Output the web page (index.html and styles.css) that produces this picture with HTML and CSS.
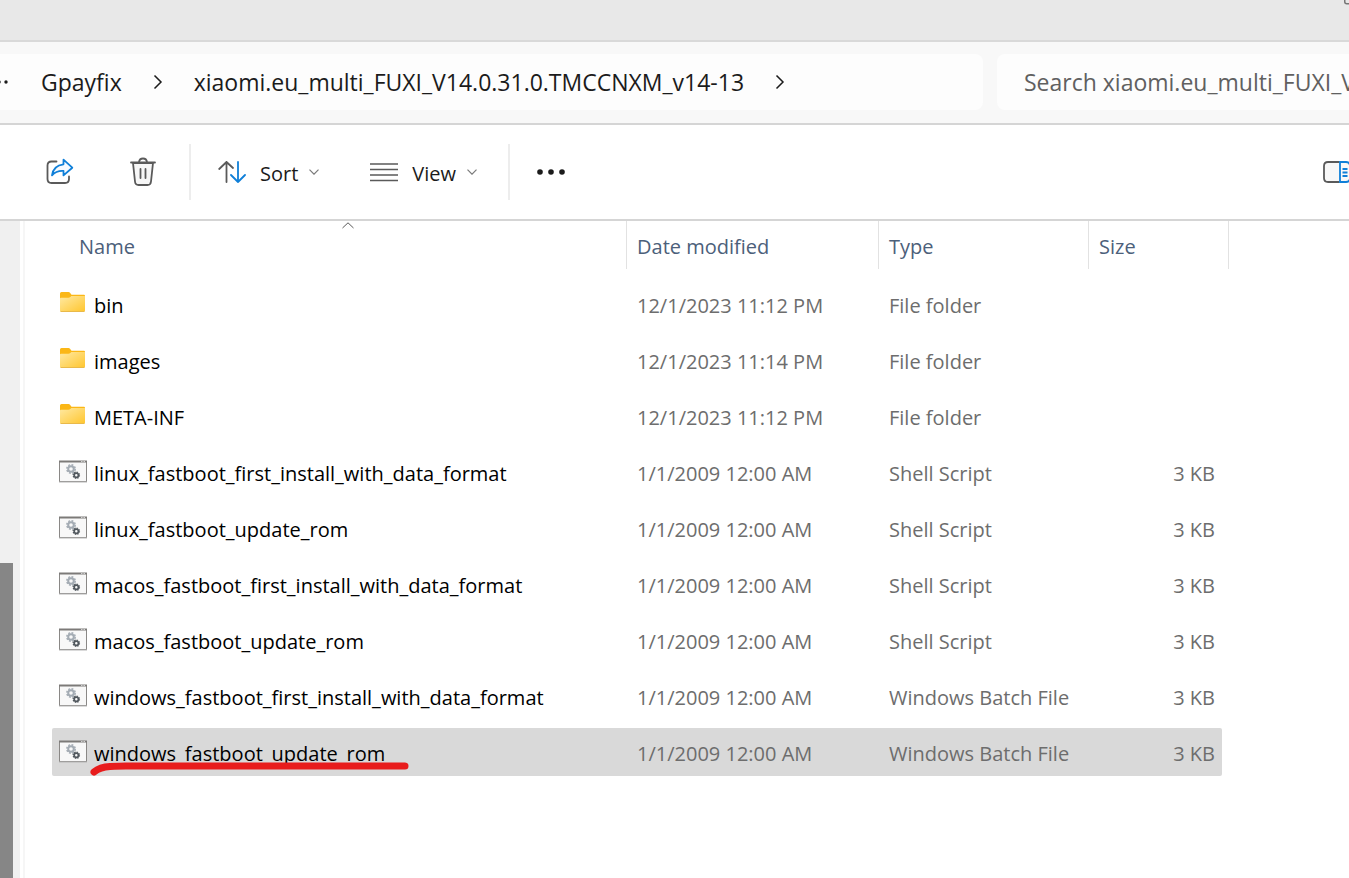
FILE: index.html
```html
<!DOCTYPE html>
<html lang="en">
  <head>
    <meta charset="utf-8">
    <meta name="viewport" content="width=device-width, initial-scale=1.0">
    <title>xiaomi.eu_multi_FUXI_V14.0.31.0.TMCCNXM_v14-13</title>
    <link rel="stylesheet" href="styles.css">
  </head>
  <body>

  <!-- shared icons -->
  <svg class="sprite" aria-hidden="true">
    <defs>
      <linearGradient id="folder_fill" x1="0" y1="0" x2="1" y2="1">
        <stop offset="0" stop-color="#ffe9a2"/>
        <stop offset="1" stop-color="#ffc62f"/>
      </linearGradient>
      <symbol id="folder" viewBox="0 2 28 24">
        <path d="M1 3.500Q1 2 2.500 2H9.500Q10.500 2 11.200 3L12.500 4.800H25Q26 4.800 26 6V12H1Z" fill="#fbb716"/>
        <path d="M1 8.500Q1 7.700 2 7.700H9.500Q10.500 7.700 11.300 7L12.300 6.100H26V20.500Q26 21.500 25 21.500H2Q1 21.500 1 20.500Z" fill="url(#folder_fill)"/>
        <path d="M1.500 21.500H25.500" stroke="#e9b94a" stroke-width="1"/>
      </symbol>
      <symbol id="script" viewBox="0 0 28 24">
        <rect x="0.500" y="1.500" width="27" height="20" fill="#f8f8f8" stroke="#8a8886"/>
        <path d="M0 1.500H28" stroke="#7c7a78" stroke-width="2"/>
        <path d="M22 1.500H23.500M24.500 1.500H26" stroke="#d0d0d0" stroke-width="1"/>
        <path d="M0 22H28" stroke="#b5b5b5" stroke-width="1"/>
        <circle cx="12" cy="9" r="2.800" fill="none" stroke="#a3abb3" stroke-width="2"/>
        <circle cx="12" cy="9" r="4.200" fill="none" stroke="#a3abb3" stroke-width="1.500" stroke-dasharray="1.900 1.400"/>
        <circle cx="17.300" cy="15.200" r="2.100" fill="none" stroke="#50575d" stroke-width="1.700"/>
        <circle cx="17.300" cy="15.200" r="3.200" fill="none" stroke="#50575d" stroke-width="1.200" stroke-dasharray="1.400 1.110"/>
      </symbol>
      <symbol id="chevron" viewBox="0 0 10 6">
        <path d="M0.500 0.700L5 5.200L9.500 0.700" fill="none" stroke="#7a7a7a" stroke-width="1.200"/>
      </symbol>
      <symbol id="crumb_arrow" viewBox="0 0 10 16">
        <path d="M1.500 1.500L8 8L1.500 14.500" fill="none" stroke="#1b1b1b" stroke-width="1.500"/>
      </symbol>
    </defs>
  </svg>

  <header class="titlebar">
    <button class="maximize" aria-label="Maximize">
      <svg width="16" height="16" viewBox="0 0 16 16"><rect x="0.750" y="0.750" width="14" height="14" rx="2" fill="none" stroke="#777" stroke-width="1.500"/></svg>
    </button>
  </header>

  <div class="address-bar">
    <nav class="breadcrumb" aria-label="Path">
      <button class="crumb-more" aria-label="More folders">
        <svg width="20" height="4" viewBox="0 0 20 4" fill="#1b1b1b"><circle cx="2" cy="2" r="1.700"/><circle cx="9" cy="2" r="1.700"/><circle cx="16" cy="2" r="1.700"/></svg>
      </button>
      <a href="#">Gpayfix</a>
      <svg class="crumb-arrow"><use href="#crumb_arrow"/></svg>
      <a href="#">xiaomi.eu_multi_FUXI_V14.0.31.0.TMCCNXM_v14-13</a>
      <svg class="crumb-arrow"><use href="#crumb_arrow"/></svg>
    </nav>
    <input type="text" class="search" aria-label="Search" placeholder="Search xiaomi.eu_multi_FUXI_V14.0.31.0.TMCCNXM_v14-13">
  </div>

  <div class="toolbar">
    <div class="group">
      <button aria-label="Share">
        <svg width="28" height="28" viewBox="0 0 28 28" fill="none" stroke-width="1.800">
          <path d="M10.500 3.500H5.500Q1.500 3.500 1.500 7.500V21Q1.500 25 5.500 25H19Q23 25 23 21V18.500" stroke="#5a5a5a" stroke-linecap="round"/>
          <path d="M17.500 1.700L26.300 9.700L17.500 17.400V13Q10.500 12.500 6 17.300Q7.300 7.500 17.500 6.300Z" fill="#f5faff" stroke="#0f7fd8" stroke-linejoin="round"/>
        </svg>
      </button>
      <button aria-label="Delete">
        <svg width="28" height="30" viewBox="0 0 28 30" fill="none" stroke="#5a5a5a" stroke-width="1.800" stroke-linecap="round" stroke-linejoin="round">
          <path d="M4 6L6 24.500Q6.300 28 9.500 28H18.500Q21.700 28 22 24.500L24 6Z" fill="#f7f7f7"/>
          <path d="M2 5.500H26M10 5Q10.500 1.500 14 1.500T18 5M11.500 12V21M16.500 12V21"/>
        </svg>
      </button>
    </div>
    <div class="group">
      <button>
        <svg width="28" height="24" viewBox="0 0 28 24" fill="none" stroke-width="1.800" stroke-linecap="round" stroke-linejoin="round">
          <path d="M8.500 22V2M1.200 9L8.500 2L15 8" stroke="#5a5a5a"/>
          <path d="M20 2V22M13 15L20 22L27 15" stroke="#0f7fd8"/>
        </svg>
        <span>Sort</span>
        <svg class="chevron"><use href="#chevron"/></svg>
      </button>
      <button>
        <svg width="28" height="20" viewBox="0 0 28 20" stroke="#5a5a5a" stroke-width="1.500"><path d="M0 2H28M0 7.500H28M0 13H28M0 18.500H28"/></svg>
        <span>View</span>
        <svg class="chevron"><use href="#chevron"/></svg>
      </button>
    </div>
    <div class="group">
      <button aria-label="See more">
        <svg width="28" height="6" viewBox="0 0 28 6" fill="#1b1b1b"><circle cx="3" cy="3" r="2.800"/><circle cx="14" cy="3" r="2.800"/><circle cx="25" cy="3" r="2.800"/></svg>
      </button>
    </div>
    <button class="details-pane" aria-label="Details pane">
      <svg width="28" height="22" viewBox="0 0 28 22" fill="#f8f8f8" stroke-width="1.800">
        <path d="M16.500 1H5Q1 1 1 5V17Q1 21 5 21H16.500" stroke="#5a5a5a"/>
        <path d="M17 1H23Q27 1 27 5V17Q27 21 23 21H17ZM19.500 8H24.500M19.500 11.500H24.500M19.500 15H24.500" stroke="#0f7fd8"/>
      </svg>
    </button>
  </div>

  <main class="content">
    <div class="nav-scroll"><div class="thumb"></div></div>
    <div class="files">
      <table>
        <thead>
          <tr>
            <th class="name"><button>Name<svg class="sort-mark" viewBox="0 0 12 7"><path d="M0.500 6L6 0.800L11.500 6" fill="none" stroke="#5a5a5a"/></svg></button></th>
            <th class="date"><button>Date modified</button></th>
            <th class="type"><button>Type</button></th>
            <th class="size"><button>Size</button></th>
          </tr>
        </thead>
        <tbody>
          <tr>
            <td><span class="file"><svg><use href="#folder"/></svg>bin</span></td>
            <td>12/1/2023 11:12 PM</td><td>File folder</td><td></td>
          </tr>
          <tr>
            <td><span class="file"><svg><use href="#folder"/></svg>images</span></td>
            <td>12/1/2023 11:14 PM</td><td>File folder</td><td></td>
          </tr>
          <tr>
            <td><span class="file"><svg><use href="#folder"/></svg>META-INF</span></td>
            <td>12/1/2023 11:12 PM</td><td>File folder</td><td></td>
          </tr>
          <tr>
            <td><span class="file"><svg><use href="#script"/></svg>linux_fastboot_first_install_with_data_format</span></td>
            <td>1/1/2009 12:00 AM</td><td>Shell Script</td><td>3 KB</td>
          </tr>
          <tr>
            <td><span class="file"><svg><use href="#script"/></svg>linux_fastboot_update_rom</span></td>
            <td>1/1/2009 12:00 AM</td><td>Shell Script</td><td>3 KB</td>
          </tr>
          <tr>
            <td><span class="file"><svg><use href="#script"/></svg>macos_fastboot_first_install_with_data_format</span></td>
            <td>1/1/2009 12:00 AM</td><td>Shell Script</td><td>3 KB</td>
          </tr>
          <tr>
            <td><span class="file"><svg><use href="#script"/></svg>macos_fastboot_update_rom</span></td>
            <td>1/1/2009 12:00 AM</td><td>Shell Script</td><td>3 KB</td>
          </tr>
          <tr>
            <td><span class="file"><svg><use href="#script"/></svg>windows_fastboot_first_install_with_data_format</span></td>
            <td>1/1/2009 12:00 AM</td><td>Windows Batch File</td><td>3 KB</td>
          </tr>
          <tr class="selected">
            <td>
              <span class="file"><svg><use href="#script"/></svg>windows_fastboot_update_rom</span>
              <svg class="marker" viewBox="0 0 320 14"><path d="M4 10Q10 5 20 4.500T36 4H315" fill="none" stroke="#e81c1c" stroke-width="7" stroke-linecap="round"/></svg>
            </td>
            <td>1/1/2009 12:00 AM</td><td>Windows Batch File</td><td>3 KB</td>
          </tr>
        </tbody>
      </table>
    </div>
  </main>

  </body>
</html>
```
FILE: styles.css
```css
* {
    box-sizing: border-box;
}

body {
    margin: 0;
    height: 100vh;
    display: flex;
    flex-direction: column;
    overflow: hidden;
    font-family: "Segoe UI", "Open Sans", "Noto Sans", sans-serif;
    font-size: 20px;
    color: #1b1b1b;
    background-color: #fff;
}

button {
    border: 0;
    padding: 0;
    background: none;
    font: inherit;
    color: inherit;
}

svg {
    display: block;
    flex-shrink: 0;
}

.sprite {
    position: absolute;
    width: 0;
    height: 0;
}

/* window title bar */
.titlebar {
    flex-shrink: 0;
    height: 42px;
    display: flex;
    justify-content: flex-end;
    align-items: flex-start;
    background-color: #e8e8e8;
    border-bottom: 2px solid #d9d9d9;
}
.maximize {
    margin: -11px -11px 0 0;
}

/* path and search */
.address-bar {
    flex-shrink: 0;
    display: flex;
    gap: 14px;
    padding: 12px 0 13px;
    background-color: #f8f8f8;
    border-bottom: 2px solid #d5d5d5;
    font-size: 23px;
}
.breadcrumb {
    flex: 1;
    min-width: 0;
    height: 56px;
    display: flex;
    align-items: center;
    background-color: #fdfdfd;
    border-radius: 0 8px 8px 0;
    white-space: nowrap;
}
.breadcrumb a {
    color: inherit;
    text-decoration: none;
}
.crumb-more {
    margin: 0 31px 0 -10px;
}
.crumb-arrow {
    width: 10px;
    height: 16px;
    margin: 0 31px;
}
.search {
    flex: 0 0 352px;
    min-width: 0;
    height: 56px;
    padding: 0 0 0 27px;
    border: 0;
    border-radius: 8px 0 0 8px;
    background-color: #fdfdfd;
    font: inherit;
}
.search::placeholder {
    color: #606060;
    opacity: 1;
}

/* command bar */
.toolbar {
    flex-shrink: 0;
    height: 96px;
    display: flex;
    align-items: center;
    border-bottom: 2px solid #d5d5d5;
}
.toolbar button {
    display: flex;
    align-items: center;
}
.group {
    height: 56px;
    display: flex;
    align-items: center;
    gap: 51px;
    padding: 0 31px 0 27px;
    border-right: 2px solid #ededed;
}
.group:first-child {
    gap: 55px;
    padding: 0 32px 0 46px;
}
.group:nth-child(3) {
    border-right: 0;
}
.group span {
    margin: 0 11px 0 14px;
    padding-top: 2px;
}
.chevron {
    width: 10px;
    height: 6px;
}
.details-pane {
    margin: 0 -2px 0 auto;
}

/* navigation pane edge */
.content {
    flex: 1;
    min-height: 0;
    display: flex;
}
.nav-scroll {
    width: 20px;
    flex-shrink: 0;
    display: flex;
    align-items: flex-end;
    background-color: #f0f0f0;
}
.thumb {
    width: 13px;
    height: 48%;
    background-color: #868686;
}

/* file list */
.files {
    flex: 1;
    margin-left: 3px;
    padding-left: 27px;
    border-left: 2px solid #f6f6f6;
}
table {
    table-layout: fixed;
    width: 1170px;
    margin-top: -8px;
    border-collapse: separate;
    border-spacing: 0 8px;
}
th {
    padding: 0 0 3px;
    font-weight: normal;
    color: #4c607a;
}
th button {
    position: relative;
    display: block;
    width: 100%;
    height: 48px;
    padding: 2px 0 0 10px;
    border-right: 1px solid #e2e2e2;
    text-align: left;
}
th.name {
    padding-left: 17px;
}
th.date {
    width: 252px;
}
th.type {
    width: 210px;
}
th.size {
    width: 133px;
}
th.size button {
    width: calc(100% + 7px);
}
.sort-mark {
    position: absolute;
    top: 1px;
    left: calc(50% - 6px);
    width: 12px;
    height: 7px;
}
td {
    position: relative;
    height: 48px;
    padding: 2px 0 0 10px;
    color: #6d6d6d;
    white-space: nowrap;
}
td:first-child {
    padding-left: 7px;
    color: #000;
}
td:last-child {
    padding: 2px 7px 0 0;
    text-align: right;
}
.file {
    display: flex;
    align-items: center;
    gap: 7px;
}
.file svg {
    width: 28px;
    height: 24px;
    margin-bottom: 2px;
}
.selected td {
    background-color: #d9d9d9;
}
.selected td:first-child {
    border-radius: 2px 0 0 2px;
}
.selected td:last-child {
    border-radius: 0 2px 2px 0;
}

/* red pen stroke under the file name */
.marker {
    position: absolute;
    left: 38px;
    top: 34px;
    width: 320px;
    height: 14px;
}
```
